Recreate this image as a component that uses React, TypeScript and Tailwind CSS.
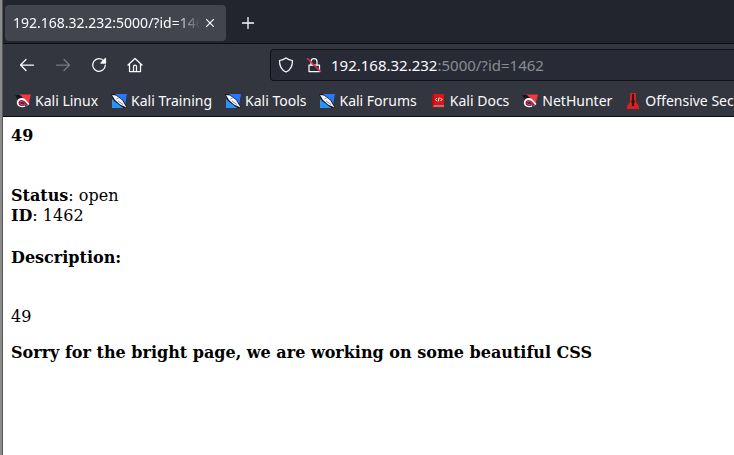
import React from 'react';

const magnet = (
  <svg className="h-4 w-4 shrink-0" viewBox="0 0 16 16" aria-hidden="true">
    <path d="M4 1.500h12l-2.500 10z" fill="#f23a3a" />
    <path d="M0 2h5l3 3-5 2z" fill="#15171c" />
    <path d="M2 8.500C3 4.500 8 4 10.500 6.500l4 4.500-2.500 2-3-3.500C7.500 8 5 8 5 9.500c0 2 2.500 2.500 4 1.500l1.500 2.500C6 15.500.8 13 2 8.500z" fill="#fff" />
    <path d="M12.500 12.500L9.500 9C7.500 7 4.500 7.500 4.200 9.500c-.2 2.500 3 3.500 5.300 2.200" fill="none" stroke="#b3123c" strokeWidth="1.600" />
  </svg>
);

const knife = (
  <svg className="h-4 w-4 shrink-0" viewBox="0 0 16 16" aria-hidden="true">
    <path d="M3 1h13l-2 11z" fill="#2878ff" />
    <path d="M1 6l11 9H1z" fill="#2b93ff" />
    <path d="M0 1h4l8 6 4 7v1h-3L3 8z" fill="#15181f" />
    <path d="M1 2l4 .5L11 7l4.500 7.500L9 11.500 4 7z" fill="#f4f6f8" />
    <path d="M5.500 6l2.500-1.500M7 8l5 3.500" stroke="#8d959f" strokeWidth="1" />
  </svg>
);

const book = (
  <svg className="h-4 w-4 shrink-0" viewBox="0 0 16 16" aria-hidden="true">
    <path d="M2 1h12v11H2z" fill="#dc1414" />
    <path d="M2 1h2v11H2z" fill="#b50d0d" />
    <path d="M3 12h11v2H3z" fill="#8b8588" />
    <path d="M2 12h1.500v2H14v1H2z" fill="#b50d0d" />
    <path d="M7 5L5.500 6.500 7 8M10.500 5L12 6.500 10.500 8M9.200 4.500l-1 4" fill="none" stroke="#fff" strokeWidth="1" />
  </svg>
);

const tower = (
  <svg className="h-4 w-4 shrink-0" viewBox="0 0 16 16" aria-hidden="true">
    <path d="M5 0h6v9l3 4v3H2v-3l3-4z" fill="#d32020" />
    <path d="M7 1h2v6l1 2-1 1v3H7v-3L6 9l1-2z" fill="#3c1115" />
  </svg>
);

const bookmarks = [
  { label: 'Kali Linux', icon: magnet },
  { label: 'Kali Training', icon: knife },
  { label: 'Kali Tools', icon: knife },
  { label: 'Kali Forums', icon: knife },
  { label: 'Kali Docs', icon: book },
  { label: 'NetHunter', icon: magnet },
  { label: 'Offensive Security', icon: tower },
];

function Icon({ children }: { children: React.ReactNode }) {
  return (
    <svg className="h-4 w-4" viewBox="0 0 16 16" fill="none" stroke="currentColor" strokeWidth="1.250" strokeLinecap="round" strokeLinejoin="round" aria-hidden="true">
      {children}
    </svg>
  );
}

export default function App() {
  return (
    <div className="min-h-screen border-l-2 border-[#8b8b88] bg-white font-['Noto_Sans',sans-serif] text-[#fbfbfe]">
      <div className="min-h-screen overflow-hidden border-l border-[#55565a]">
        <div className="flex h-11 items-start border-b border-[#0c0c0d] bg-[#22252e] pt-[5px] pl-0.5">
          <div className="flex h-9 w-[221px] items-center rounded bg-[#42454d] px-2">
            <span className="min-w-0 flex-1 overflow-hidden text-sm whitespace-nowrap [mask-image:linear-gradient(to_right,black_86%,transparent_99%)]">
              192.168.32.232:5000/?id=1462
            </span>
            <button aria-label="Close tab" className="flex w-4 justify-center">
              <svg className="h-2 w-2" viewBox="0 0 8 8" stroke="currentColor" strokeWidth="1.200" aria-hidden="true">
                <path d="M0 0l8 8M8 0L0 8" />
              </svg>
            </button>
          </div>
          <button aria-label="New tab" className="ml-3.5 flex h-9 w-4 items-center justify-center">
            <svg className="h-3 w-3" viewBox="0 0 12 12" stroke="currentColor" strokeWidth="1.300" aria-hidden="true">
              <path d="M6 0v12M0 6h12" />
            </svg>
          </button>
        </div>

        <div className="flex h-11 items-center bg-[#33363e] pb-0.5 pl-4">
          <div className="flex w-[251px] shrink-0 gap-5">
            <button aria-label="Back"><Icon><path d="M14.500 8h-13M7 2.500L1.500 8 7 13.500" /></Icon></button>
            <button aria-label="Forward" disabled className="text-[#77797f]"><Icon><path d="M1.500 8h13M9 2.500L14.500 8 9 13.500" /></Icon></button>
            <button aria-label="Reload"><Icon><path d="M13 4.200a6.300 6.300 0 1 0 1.300 3.800" /><path d="M14.500 1.500v4.500H10z" fill="currentColor" /></Icon></button>
            <button aria-label="Home"><Icon><path d="M1 8l7-6.500L15 8M2.500 7v7.500h11V7M6.500 14V9.500a1.500 1.500 0 0 1 3 0V14" /></Icon></button>
          </div>
          <div className="flex h-8 min-w-0 flex-1 items-center rounded-l border border-r-0 border-[#111217] bg-[#282a36] pl-[7px]">
            <Icon><path d="M8 1c2 1.500 4 2.200 6.500 2.500C14.500 9 13 13 8 15 3 13 1.500 9 1.500 3.500 4 3.200 6 2.500 8 1z" /></Icon>
            <span className="ml-3">
              <Icon><path d="M3 8h10.500v6.500H3zM5 8V4.500a3 3 0 0 1 6 0V8" /><path d="M1.500 1.500l13 13" stroke="#e22850" strokeWidth="1.500" /></Icon>
            </span>
            <div className="ml-[9px] text-[15px] whitespace-nowrap">
              192.168.32.232<span className="text-[#8b8c94]">:5000/?id=1462</span>
            </div>
          </div>
        </div>

        <nav className="flex h-[29px] gap-[13px] overflow-hidden border-b border-[#0c0c0d] bg-[#33363e] pb-0.5 pl-3">
          {bookmarks.map(({ label, icon }) => (
            <a key={label} href="#" className="flex shrink-0 items-center gap-1 text-sm whitespace-nowrap">
              {icon}
              {label}
            </a>
          ))}
        </nav>

        <main className="px-2 font-['DejaVu_Serif',serif] text-base leading-5 text-black">
          <h1 className="mt-[9px] font-bold">49</h1>
          <p className="mt-10">
            <b>Status</b>: open
            <br />
            <b>ID</b>: 1462
          </p>
          <h2 className="mt-[22px] font-bold">Description:</h2>
          <p className="mt-[39px]">49</p>
          <h3 className="mt-4 font-bold">Sorry for the bright page, we are working on some beautiful CSS</h3>
        </main>
      </div>
    </div>
  );
}
